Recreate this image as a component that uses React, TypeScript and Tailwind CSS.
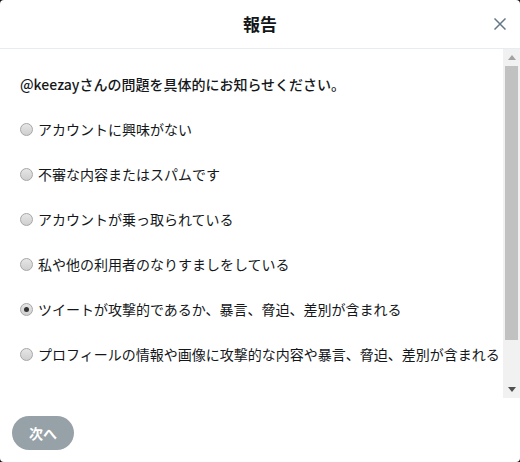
import { useState } from 'react';

const reasons = [
  'アカウントに興味がない',
  '不審な内容またはスパムです',
  'アカウントが乗っ取られている',
  '私や他の利用者のなりすましをしている',
  'ツイートが攻撃的であるか、暴言、脅迫、差別が含まれる',
  'プロフィールの情報や画像に攻撃的な内容や暴言、脅迫、差別が含まれる',
];

function Radio({ checked }: { checked: boolean }) {
  return (
    <span className="w-[13px] h-[13px] shrink-0 rounded-full border border-[#a6a6a6] bg-gradient-to-b from-[#e6e6e6] to-[#cfcfcf] flex items-center justify-center">
      {checked && <span className="w-[5px] h-[5px] rounded-full bg-[#333]" />}
    </span>
  );
}

function Scrollbar() {
  return (
    <div className="w-[17px] shrink-0 bg-[#f1f1f1] flex flex-col items-center">
      <div className="h-[17px] w-full flex items-center justify-center">
        <svg width="8" height="5" viewBox="0 0 8 5"><path d="M0 5 L4 0 L8 5 Z" fill="#a3a3a3" /></svg>
      </div>
      <div className="w-[13px] h-[274px] bg-[#c1c1c1]" />
      <div className="flex-1" />
      <div className="h-[17px] w-full flex items-center justify-center">
        <svg width="8" height="5" viewBox="0 0 8 5"><path d="M0 0 L8 0 L4 5 Z" fill="#505050" /></svg>
      </div>
    </div>
  );
}

export default function App() {
  const [selected, setSelected] = useState(4);

  return (
    <div className="w-[520px] h-[462px] bg-[#111]" style={{ fontFamily: '"Noto Sans CJK JP", "Noto Sans", sans-serif' }}>
      <div className="w-full h-full bg-white rounded-[4px] flex flex-col overflow-hidden">
        {/* ヘッダー */}
        <div className="h-[49px] shrink-0 border-b border-[#e6ecf0] grid grid-cols-[1fr_auto_1fr] items-center">
          <div />
          <h1 className="text-[17px] font-bold text-[#14171a]">報告</h1>
          <div className="flex justify-end pr-[14px]">
            <svg width="12" height="12" viewBox="0 0 12 12" className="text-[#657786]">
              <path d="M0.5 0.5 L11.5 11.5 M11.5 0.5 L0.5 11.5" stroke="currentColor" strokeWidth="1.5" fill="none" />
            </svg>
          </div>
        </div>

        {/* 本文 */}
        <div className="h-[349px] shrink-0 flex">
          <div className="flex-1 overflow-hidden pl-[20px] pt-[24px] text-[14px] text-[#14171a]">
            <p className="leading-[22px] font-medium">@keezayさんの問題を具体的にお知らせください。</p>
            <div className="mt-[23px] flex flex-col gap-[23px]">
              {reasons.map((r, i) => (
                <label key={r} onClick={() => setSelected(i)} className="flex items-center gap-[5px] leading-[22px] whitespace-nowrap cursor-pointer">
                  <Radio checked={selected === i} />
                  <span>{r}</span>
                </label>
              ))}
            </div>
          </div>
          <Scrollbar />
        </div>

        {/* フッター */}
        <div className="flex-1 pl-[12px] pt-[18px]">
          <button className="w-[62px] h-[34px] rounded-full bg-[#97a2a8] text-white text-[14px] font-bold">次へ</button>
        </div>
      </div>
    </div>
  );
}
